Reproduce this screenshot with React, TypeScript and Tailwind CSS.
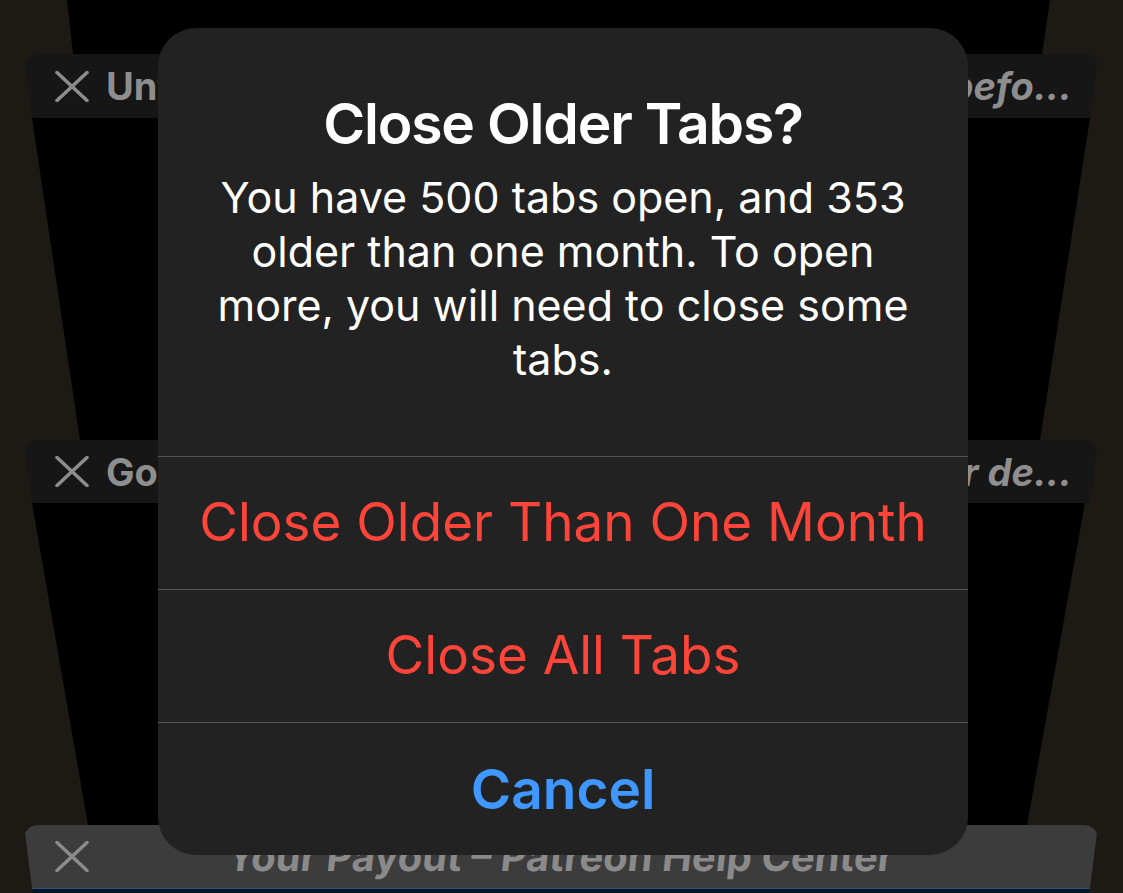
import React from "react";

function XIcon({ color = "#8c8c8c" }: { color?: string }) {
  return (
    <svg width="34" height="31" viewBox="0 0 34 31" className="shrink-0">
      <path d="M2 1.5 L32 29.5 M32 1.5 L2 29.5" stroke={color} strokeWidth="3.6" strokeLinecap="round" fill="none" />
    </svg>
  );
}

function TabHeader({
  h,
  bg,
  left,
  right,
}: {
  h: string;
  bg: string;
  left: string;
  right: string;
}) {
  return (
    <div
      className={`ml-[24px] w-[1074px] shrink-0 rounded-t-[14px] ${h} ${bg} [clip-path:polygon(0_0,1074px_0,1066px_100%,8px_100%)] flex items-center pl-[31px] pr-[26px]`}
    >
      <XIcon />
      <span className="ml-[17px] text-[38px] font-bold text-[#8e8e8e] leading-none whitespace-nowrap">{left}</span>
      <span className="ml-auto text-[38px] font-bold italic text-[#8e8e8e] leading-none whitespace-nowrap">{right}</span>
    </div>
  );
}

export default function App() {
  return (
    <div className="relative w-[1123px] h-[893px] overflow-hidden bg-[#1d1915] flex flex-col font-['Inter','Noto_Sans',sans-serif]">
      {/* card 0 body */}
      <div className="h-[54px] shrink-0 bg-black [clip-path:polygon(67px_0,1050px_0,1042px_100%,73px_100%)]" />

      {/* card 1 */}
      <TabHeader h="h-[64px]" bg="bg-[#161616]" left="Untitled" right="Read this befo..." />
      <div className="h-[322px] shrink-0 bg-black [clip-path:polygon(32px_0,1090px_0,1040px_100%,80px_100%)]" />

      {/* card 2 */}
      <TabHeader h="h-[63px]" bg="bg-[#161616]" left="Google" right="for de..." />
      <div className="h-[322px] shrink-0 bg-black [clip-path:polygon(32px_0,1085px_0,1027px_100%,88px_100%)]" />

      {/* card 3 */}
      <div className="ml-[24px] w-[1074px] h-[63px] shrink-0 rounded-t-[14px] bg-[#3c3c3c] [clip-path:polygon(0_0,1074px_0,1066px_100%,8px_100%)] flex items-center pl-[31px] pr-[26px]">
        <XIcon color="#8a8a8a" />
        <span className="flex-1 text-center pr-[40px] text-[40px] font-bold text-[#8a8a8a] leading-none whitespace-nowrap [transform:skewX(-6deg)]">
          Your Payout – Patreon Help Center
        </span>
      </div>
      <div className="h-[5px] shrink-0 bg-[#03172a] border-t border-[#2b5570] [clip-path:polygon(32px_0,1090px_0,1089px_100%,33px_100%)]" />

      {/* alert dialog */}
      <div className="absolute left-[158px] top-[28px] w-[810px] h-[827px] rounded-[38px] bg-[#222222] flex flex-col text-center">
        <div className="h-[428px] shrink-0 flex flex-col items-center">
          <div className="pt-[61px] text-[57px] leading-[70px] tracking-[-1.2px] font-semibold text-white">Close Older Tabs?</div>
          <div className="mt-[11px] text-[43px] leading-[54px] text-white">
            You have 500 tabs open, and 353
            <br />
            older than one month. To open
            <br />
            more, you will need to close some
            <br />
            tabs.
          </div>
        </div>
        <div className="h-[133px] shrink-0 border-t border-[#555557] flex items-center justify-center text-[53px] text-[#ff453a]">
          Close Older Than One Month
        </div>
        <div className="h-[133px] shrink-0 border-t border-[#555557] flex items-center justify-center text-[53px] text-[#ff453a]">
          Close All Tabs
        </div>
        <div className="h-[133px] shrink-0 border-t border-[#555557] flex items-center justify-center text-[55px] font-semibold text-[#3f97ff]">
          Cancel
        </div>
      </div>
    </div>
  );
}
